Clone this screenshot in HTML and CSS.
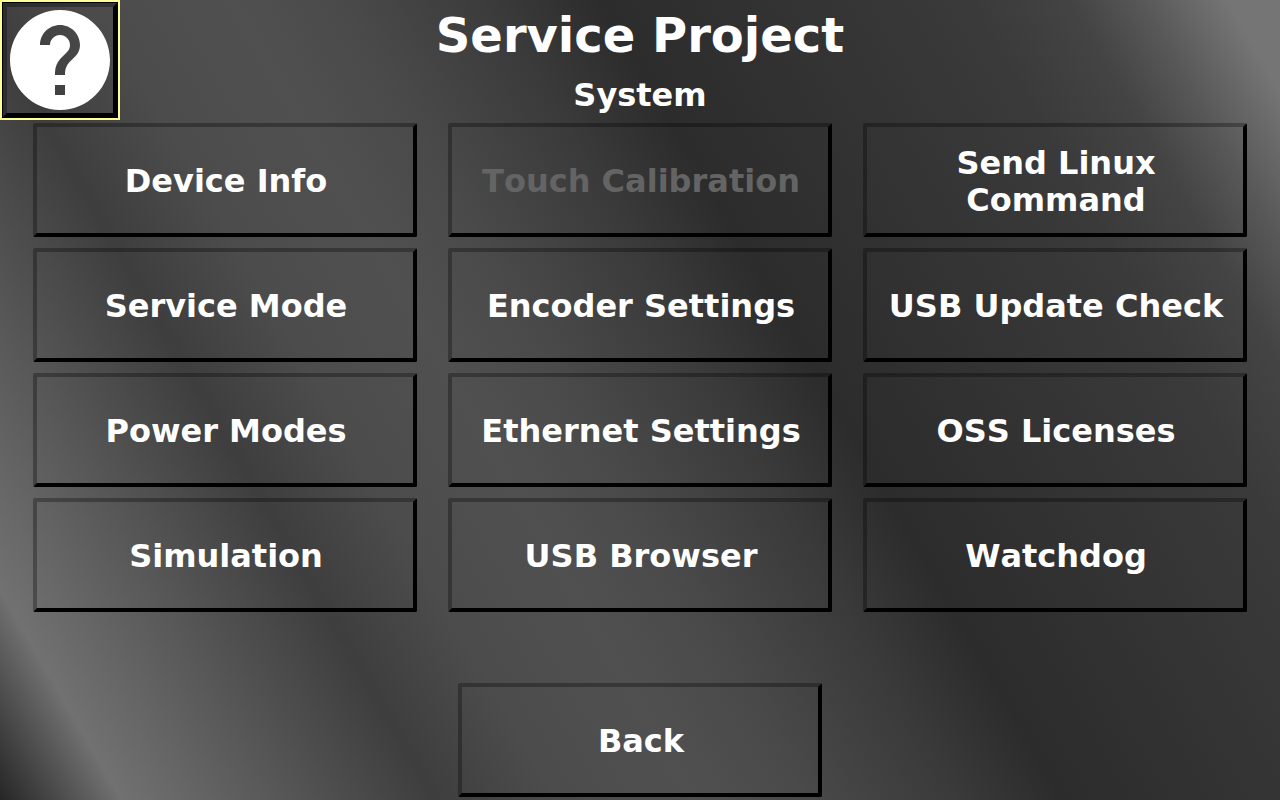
FILE: index.html
```html
<!DOCTYPE html>
<html lang="en">
<head>
    <meta charset="UTF-8">
    <meta name="viewport" content="width=device-width, initial-scale=1.0">
    <title>Service Project</title>
    <link rel="stylesheet" href="styles.css">
</head>
<body>

<button class="help" type="button" aria-label="Help">
    <svg class="help-icon" viewBox="0 0 24 24" aria-hidden="true">
        <path d="M12 2C6.48 2 2 6.48 2 12s4.48 10 10 10 10-4.48 10-10S17.52 2 12 2zm1 17h-2v-2h2v2zm2.07-7.75l-.9.92C13.45 12.9 13 13.5 13 15h-2v-.5c0-1.1.45-2.1 1.17-2.83l1.24-1.26c.37-.36.59-.86.59-1.41 0-1.1-.9-2-2-2s-2 .9-2 2H8c0-2.21 1.79-4 4-4s4 1.79 4 4c0 .88-.36 1.68-.93 2.25z"/>
    </svg>
</button>

<header>
    <h1>Service Project</h1>
    <h2>System</h2>
</header>

<main class="menu">
    <button class="button" type="button">Device Info</button>
    <button class="button" type="button" disabled>Touch Calibration</button>
    <button class="button" type="button">Send Linux Command</button>
    <button class="button" type="button">Service Mode</button>
    <button class="button" type="button">Encoder Settings</button>
    <button class="button" type="button">USB Update Check</button>
    <button class="button" type="button">Power Modes</button>
    <button class="button" type="button">Ethernet Settings</button>
    <button class="button" type="button">OSS Licenses</button>
    <button class="button" type="button">Simulation</button>
    <button class="button" type="button">USB Browser</button>
    <button class="button" type="button">Watchdog</button>
</main>

<footer>
    <button class="button back" type="button">Back</button>
</footer>

</body>
</html>
```

FILE: styles.css
```css
* {
    box-sizing: border-box;
}

body {
    min-height: 100vh;
    margin: 0;
    padding: 7px 33px 3px;
    display: flex;
    flex-direction: column;
    color: #fff;
    font-family: "DejaVu Sans", sans-serif;
    background: linear-gradient(60deg, #262626 0%, #717171 7%, #3e3e3e 25%, #4c4c4c 32%, #505050 40%, #4a4a4a 46%, #3a3a3a 55%, #2c2c2c 61%, #3a3a3a 82%, #444 88%, #585858 92%, #757575 97%);
}

header {
    text-align: center;
}

h1 {
    margin: 0 0 14px;
    font-size: 48px;
    line-height: 56px;
}

h2 {
    margin: 0 0 9px;
    font-size: 32px;
    line-height: 37px;
}

.menu {
    display: grid;
    grid-template-columns: repeat(3, 1fr);
    grid-auto-rows: 114px;
    gap: 11px 31px;
}

/* raised look: soft edge top/left, hard black edge bottom/right */
.button,
.help {
    border: 4px solid;
    border-color: rgba(0, 0, 0, 0.3) #000 #000 rgba(0, 0, 0, 0.3);
    background: transparent;
    cursor: pointer;
}

.button {
    padding: 3px 14px 0 16px;
    border-radius: 2px;
    color: #fff;
    font-family: inherit;
    font-size: 32px;
    font-weight: bold;
    font-kerning: none;
    line-height: 37px;
}

.button:disabled {
    color: #646464;
    cursor: default;
}

/* help button sits in the corner with a yellow focus frame */
.help {
    position: absolute;
    top: 0;
    left: 0;
    width: 114px;
    height: 114px;
    margin: 3px;
    padding: 0;
    display: flex;
    align-items: center;
    justify-content: center;
    outline: 1px solid #000;
    box-shadow: 0 0 0 3px #ffff96;
}

.help-icon {
    flex: none;
    width: 120px;
    height: 120px;
    fill: #fff;
}

footer {
    margin-top: auto;
    padding-top: 16px;
    text-align: center;
}

.back {
    width: 364px;
    height: 114px;
    display: block;
    margin: 0 auto;
}
```
